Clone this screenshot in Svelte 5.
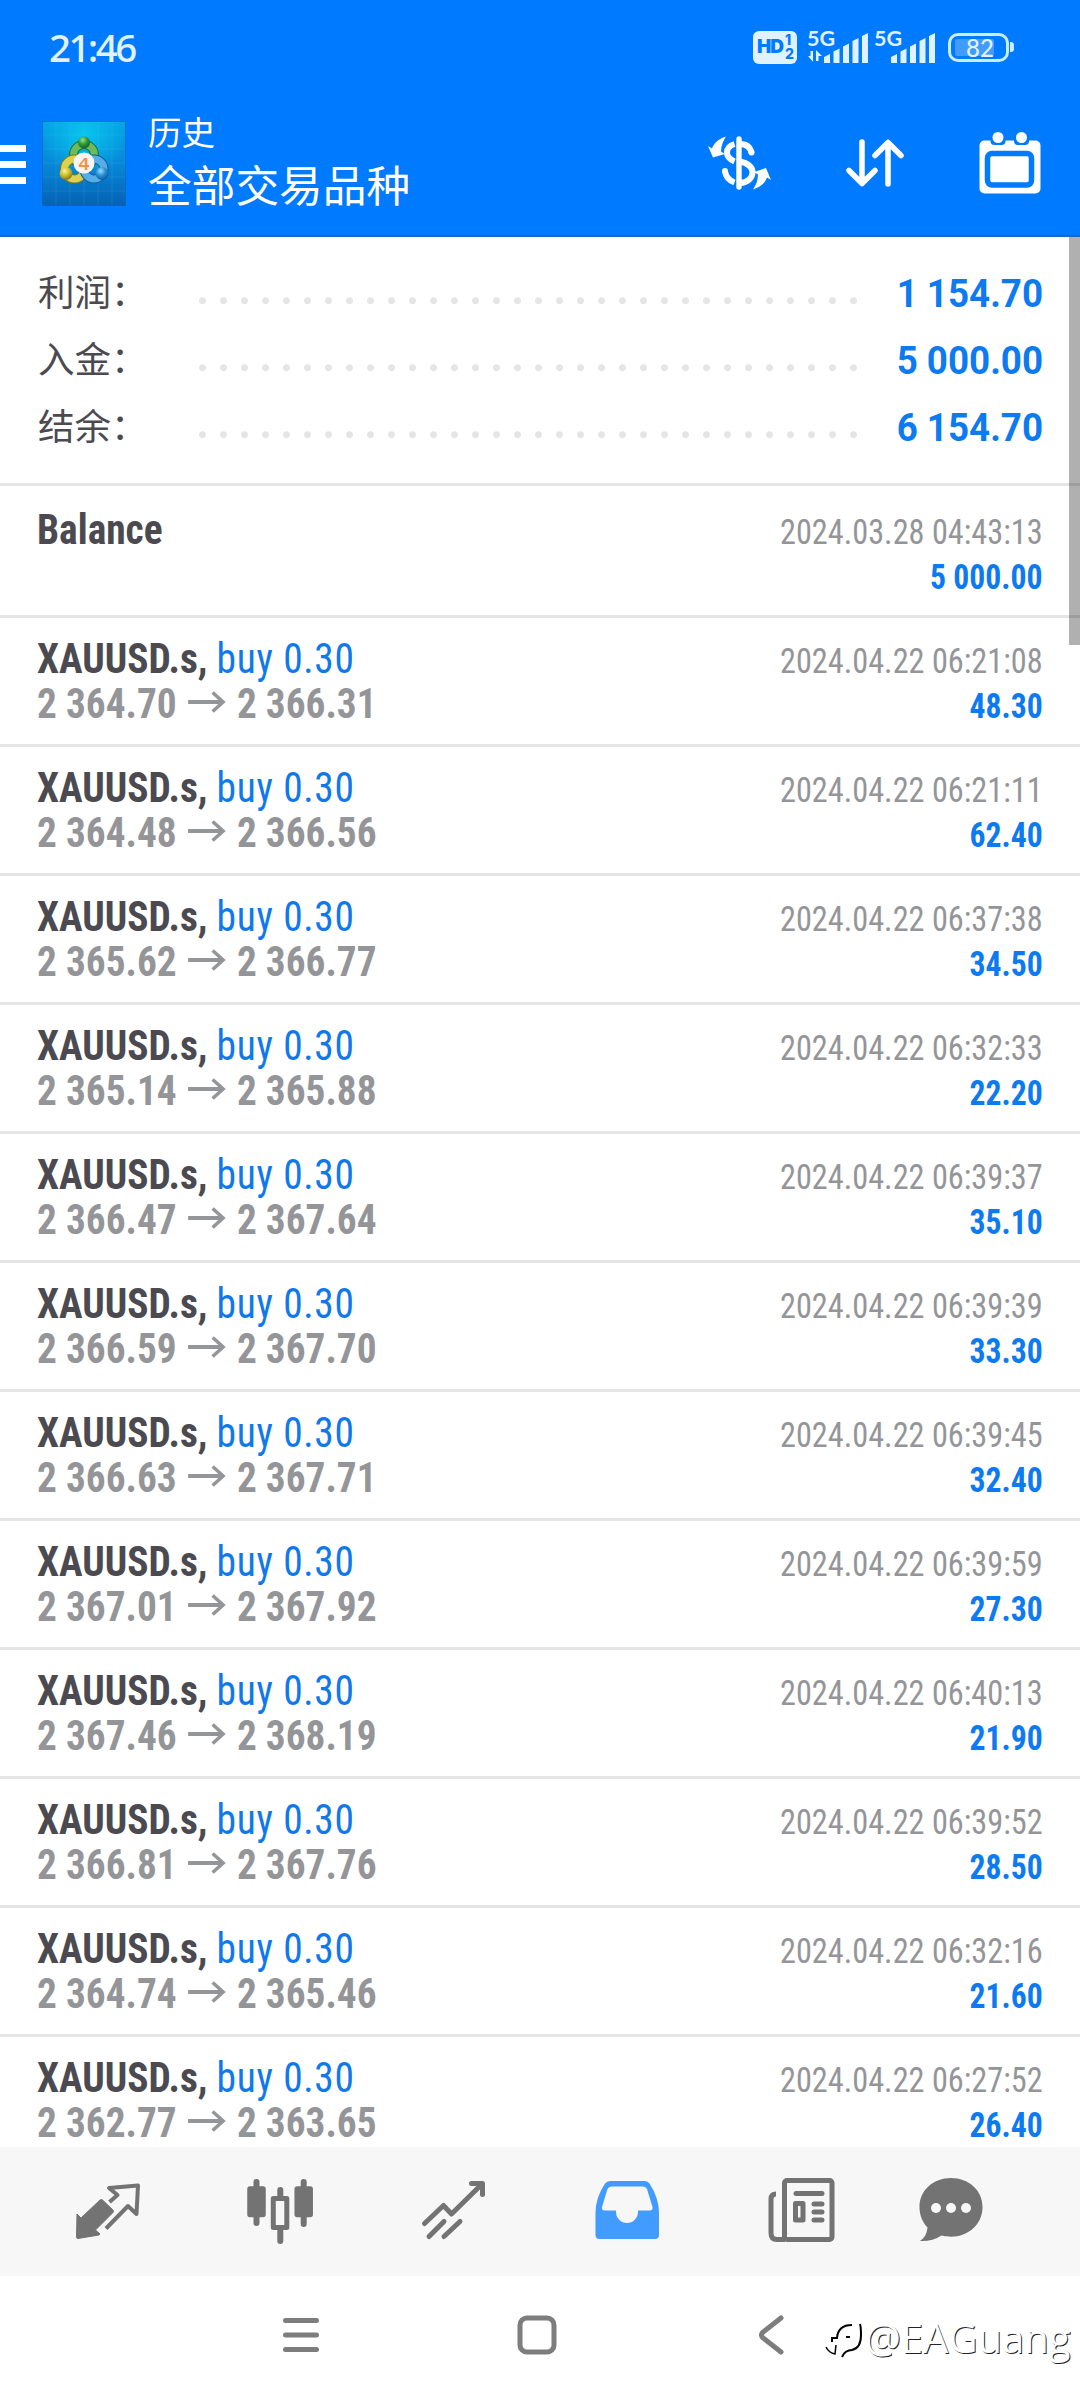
<script lang="ts">
  interface Deal {
    symbol: string;
    side?: string;
    open?: string;
    close?: string;
    time: string;
    profit: string;
  }

  const summary = [
    { label: '利润', value: '1 154.70' },
    { label: '入金', value: '5 000.00' },
    { label: '结余', value: '6 154.70' }
  ];

  function buy(open: string, close: string, time: string, profit: string): Deal {
    return { symbol: 'XAUUSD.s', side: 'buy 0.30', open, close, time: `2024.04.22 ${time}`, profit };
  }

  const deals: Deal[] = [
    { symbol: 'Balance', time: '2024.03.28 04:43:13', profit: '5 000.00' },
    buy('2 364.70', '2 366.31', '06:21:08', '48.30'),
    buy('2 364.48', '2 366.56', '06:21:11', '62.40'),
    buy('2 365.62', '2 366.77', '06:37:38', '34.50'),
    buy('2 365.14', '2 365.88', '06:32:33', '22.20'),
    buy('2 366.47', '2 367.64', '06:39:37', '35.10'),
    buy('2 366.59', '2 367.70', '06:39:39', '33.30'),
    buy('2 366.63', '2 367.71', '06:39:45', '32.40'),
    buy('2 367.01', '2 367.92', '06:39:59', '27.30'),
    buy('2 367.46', '2 368.19', '06:40:13', '21.90'),
    buy('2 366.81', '2 367.76', '06:39:52', '28.50'),
    buy('2 364.74', '2 365.46', '06:32:16', '21.60'),
    buy('2 362.77', '2 363.65', '06:27:52', '26.40')
  ];
</script>

{#snippet signal()}
  <svg class="bars" width="44" height="30" viewBox="0 0 44 30" fill="currentColor">
    <path d="M0 24l6-3v9H0zM9.5 18.5l6-3V30h-6zM19 13.5l6-3V30h-6zM28.5 8l6-3v25h-6zM38 3l6-3v30h-6z" />
  </svg>
{/snippet}

<div class="screen">
  <header>
    <div class="status-bar">
      <span class="clock">21:46</span>
      <span class="hd">
        <b>HD</b>
        <span class="hd-sims"><i>1</i><i>2</i></span>
      </span>
      <div class="network">
        <span>5G</span>
        <svg class="updown" width="14" height="12" viewBox="0 0 14 12">
          <path d="M0 6h2.500V1H5v11zM8 0v11h2.500V6H14z" fill="currentColor" />
        </svg>
        {@render signal()}
      </div>
      <div class="network">
        <span>5G</span>
        {@render signal()}
      </div>
      <div class="battery"><span>82</span></div>
      <div class="battery-cap"></div>
    </div>

    <div class="app-bar">
      <div class="menu"><span></span><span></span><span></span></div>
      <svg class="logo" width="84" height="85" viewBox="0 0 84 85">
        <defs>
          <linearGradient id="tile" x1="0" y1="0" x2="0" y2="1">
            <stop offset="0" stop-color="#04a5e6" />
            <stop offset="0.5" stop-color="#0788d8" />
            <stop offset="1" stop-color="#0561b4" />
          </linearGradient>
          <radialGradient id="glow" cx="0.5" cy="0.15" r="0.5">
            <stop offset="0" stop-color="#08c4ee" />
            <stop offset="1" stop-color="#08c4ee" stop-opacity="0" />
          </radialGradient>
          <radialGradient id="green" cx="0.4" cy="0.3" r="0.7">
            <stop offset="0" stop-color="#9be08a" />
            <stop offset="0.5" stop-color="#2f9a3d" />
            <stop offset="1" stop-color="#14652a" />
          </radialGradient>
          <radialGradient id="yellow" cx="0.4" cy="0.3" r="0.7">
            <stop offset="0" stop-color="#fbf49a" />
            <stop offset="0.5" stop-color="#cfc02c" />
            <stop offset="1" stop-color="#83791a" />
          </radialGradient>
          <radialGradient id="blue" cx="0.4" cy="0.3" r="0.7">
            <stop offset="0" stop-color="#9fdcfa" />
            <stop offset="0.5" stop-color="#2a93d8" />
            <stop offset="1" stop-color="#0c5a9c" />
          </radialGradient>
        </defs>
        <rect width="84" height="85" fill="url(#tile)" />
        <rect width="84" height="85" fill="url(#glow)" />
        <path d="M14 0v85M28 0v85M42 0v85M56 0v85M70 0v85M0 14h84M0 28h84M0 42h84M0 56h84M0 70h84" stroke="#5cc8f5" stroke-opacity="0.15" />
        <g fill="none">
          <circle cx="42" cy="34" r="10.5" stroke="#1f6b2c" stroke-width="9" />
          <circle cx="42" cy="34" r="10.5" stroke="#6cba5c" stroke-width="7" />
          <circle cx="32.5" cy="48" r="10" stroke="#81781c" stroke-width="9" />
          <circle cx="32.5" cy="48" r="10" stroke="#dcd250" stroke-width="7" />
          <circle cx="52" cy="48" r="10" stroke="#0f5da0" stroke-width="9" />
          <circle cx="52" cy="48" r="10" stroke="#56aee6" stroke-width="7" />
        </g>
        <circle cx="42" cy="21.500" r="6" fill="url(#green)" />
        <circle cx="24" cy="52.500" r="6.500" fill="url(#yellow)" />
        <circle cx="60" cy="52.500" r="6.500" fill="url(#blue)" />
        <circle cx="42" cy="42" r="10.500" fill="#f7f5f2" />
        <text x="42" y="48.500" text-anchor="middle">4</text>
        <rect x="0.5" y="0.5" width="83" height="84" fill="none" stroke="#0b62c0" stroke-opacity="0.7" />
      </svg>
      <div class="titles">
        <div class="title">历史</div>
        <div class="subtitle">全部交易品种</div>
      </div>
      <div class="actions">
        <svg width="63" height="54" viewBox="0 0 63 54" fill="none" stroke="#fff">
          <path d="M26.5 8C17 11 16 21 26.5 25.5M32 8c7 0 10.500 4 11.500 9M17 35.500c1 6 4 9 9.500 11M32 25.500c9 2 12.500 6 12.500 11S40 46.500 32 47" stroke-width="6" />
          <circle cx="43.500" cy="16.500" r="3" fill="#fff" stroke="none" />
          <circle cx="17" cy="35" r="3" fill="#fff" stroke="none" />
          <path d="M31 3v48" stroke-width="5.400" stroke-linecap="round" />
          <path d="M18 .5C10 3 6 7 4 12.500L0 10l5 11.500 12-3.500-4-2.500c0-5.500 2-10.500 5-15z" fill="#fff" stroke="none" />
          <path d="M45 53.500c8-2.500 12-6.500 14-12l4 2.500-5-12-12 4 4 2.500c0 5.500-2 10.500-5 15z" fill="#fff" stroke="none" />
        </svg>
        <svg width="58" height="48" viewBox="0 0 58 48" fill="none" stroke="#fff" stroke-width="5.500" stroke-linecap="round" stroke-linejoin="round">
          <path d="M16 3v41.500M3 31.500l13 13 13-13M42 45V3.500M29 16.500l13-13 13 13" />
        </svg>
        <svg width="62" height="62" viewBox="0 0 62 62">
          <rect x="0.5" y="8.500" width="61" height="53" rx="5" fill="#fff" />
          <path d="M11.500 7v2a4 4 0 0 0 4 4h7a4 4 0 0 0 4-4V7M35 7v2a4 4 0 0 0 4 4h7a4 4 0 0 0 4-4V7" fill="#007aff" />
          <circle cx="19" cy="5.500" r="5.500" fill="#fff" />
          <circle cx="42.500" cy="5.500" r="5.500" fill="#fff" />
          <rect x="8.500" y="21.500" width="44" height="31.500" rx="4.500" fill="#fff" stroke="#007aff" stroke-width="5.500" />
        </svg>
      </div>
    </div>
  </header>

  <main>
    <section class="summary">
      {#each summary as item}
        <div class="summary-row">
          <span class="summary-label">{item.label}：</span>
          <span class="dots"></span>
          <span class="summary-value">{item.value}</span>
        </div>
      {/each}
    </section>

    {#each deals as deal}
      <article class="deal" class:balance={!deal.side}>
        <div class="line">
          <span class="symbol">{deal.symbol}{#if deal.side}, <span class="side">{deal.side}</span>{/if}</span>
          <time>{deal.time}</time>
        </div>
        <div class="line">
          <span class="prices">
            {#if deal.open}
              {deal.open}<svg width="41" height="22" viewBox="0 0 38 22" preserveAspectRatio="none" fill="none" stroke="currentColor" stroke-width="4">
                <path d="M0 11h35" />
                <path d="M24.500 1.500L35 11l-10.500 9.500" stroke-width="3.500" />
              </svg>{deal.close}
            {:else}
              &nbsp;
            {/if}
          </span>
          <span class="profit">{deal.profit}</span>
        </div>
      </article>
    {/each}
    <div class="scrollbar"></div>
  </main>

  <nav class="tabs">
    <svg width="66" height="66" viewBox="0 0 66 66">
      <path d="M2 37l4 4L25 23q1.500-1 2.500 0L38 33q1 1.500 0 2.500L20.500 53l4.500 4-1 1L3 61.500q-1.500 0-1.500-1.500z" fill="currentColor" stroke="currentColor" stroke-linejoin="round" />
      <path d="M34.500 25l8-7-8.500-7 29-2.500L61.500 37 53 29 31 51.500" fill="none" stroke="currentColor" stroke-width="4" stroke-linejoin="round" />
    </svg>
    <svg width="66" height="68" viewBox="0 0 66 68" fill="none" stroke="currentColor" stroke-width="6" stroke-linecap="round">
      <path d="M9.500 5v41M56.700 5v42M33.300 13v10M33.300 54v10" />
      <rect x="3" y="12" width="13" height="25.500" stroke-linejoin="round" stroke-width="5.500" fill="currentColor" />
      <rect x="50.200" y="12" width="13" height="25.500" stroke-linejoin="round" stroke-width="5.500" fill="currentColor" />
      <rect x="26.300" y="21.500" width="13.500" height="29" stroke-width="5" stroke-linejoin="round" fill="#f7f7f7" />
    </svg>
    <svg width="66" height="66" viewBox="0 0 66 66" fill="none" stroke="currentColor" stroke-width="5" stroke-linecap="round" stroke-linejoin="round">
      <path d="M4.500 46.500l19-18 8 8.500L62 7M51.500 6.500h11v11M9 59.500l15-15M24 59.500l16-15" />
    </svg>
    <svg width="66" height="66" viewBox="0 0 66 66">
      <path d="M16 4h35q3 0 4.500 2.500Q65 21 65 36v22q0 4-4 4H5.500q-4 0-4-4V36q0-15 9.500-29.500Q13 4 16 4z" fill="#429bff" />
      <path d="M17.500 9.500h31.500q3 0 4 2.500l5.500 18q.5 3.500-3 3.500H44v1.500a11 11 0 0 1-22 0v-1.500H11q-3.500 0-3-3.500l5.500-18q1-2.500 4-2.500z" fill="#f7f7f7" />
    </svg>
    <svg width="68" height="66" viewBox="0 0 68 66" fill="none" stroke="currentColor" stroke-width="5" stroke-linecap="round">
      <rect x="16.500" y="3.500" width="47.500" height="59" rx="2.500" />
      <path d="M8 17q-5 0-5 5v34q0 6.500 6 6.500h8" stroke-linecap="butt" />
      <path d="M28 16.500h26M46 27h8M46 35h8M46 43h8" />
      <rect x="27.500" y="26.500" width="7.500" height="16.500" stroke-linejoin="round" />
    </svg>
    <svg width="66" height="66" viewBox="0 0 66 66">
      <path d="M33 1C15.500 1 1.500 13 1.500 30c0 8.500 3 15 8 20.500-.5 6-3 10.500-7.500 13.500 8 .5 15-1.500 21.500-5.500 3 .8 6 1.200 9.500 1.200 17.500 0 31.500-12.500 31.500-29.700C64.500 13 50.500 1 33 1z" fill="currentColor" />
      <g fill="#f7f7f7">
        <circle cx="18" cy="31" r="5" />
        <circle cx="33" cy="31" r="5" />
        <circle cx="48" cy="31" r="5" />
      </g>
    </svg>
  </nav>

  <footer>
    <svg width="38" height="38" viewBox="0 0 38 38">
      <path d="M3.500 4.500h31M3.500 19h31M3.500 33.500h31" />
    </svg>
    <svg width="40" height="40" viewBox="0 0 40 40">
      <rect x="3" y="3" width="34" height="34" rx="7" />
    </svg>
    <svg width="26" height="40" viewBox="0 0 26 40">
      <path d="M23 3L4.500 17.500q-2 2.500 0 5L23 37" />
    </svg>
    <div class="watermark">
      <svg width="38" height="42" viewBox="0 0 38 42" fill="none" stroke="#000">
        <path d="M1 30q3 6 9 7l1-9" stroke-width="1.500" />
        <path d="M7 25v-4h5q1-13 15-13" stroke-width="2" />
        <path d="M21 20h4" stroke-width="2" />
        <path d="M35 7q1 3 1 11 0 13-9 15-7 0-10 7" stroke-width="2" />
      </svg>
      <span>@EAGuang</span>
    </div>
  </footer>
</div>

<style>
  :global(body) {
    margin: 0;
    background: #fff;
  }

  .screen {
    width: 1080px;
    height: 2400px;
    display: flex;
    flex-direction: column;
    overflow: hidden;
    font-family: Roboto, 'Noto Sans CJK SC', sans-serif;
    color: #4b4a50;
    background: #fff;
  }

  svg {
    display: block;
    flex: none;
  }

  header {
    flex: none;
    height: 235px;
    border-bottom: 2px solid #1b68b8;
    background: #007aff;
    color: #fff;
  }

  .status-bar {
    height: 94px;
    display: flex;
    align-items: center;
    padding: 0 67px 0 49px;
    color: #e1f2ff;
  }

  .clock {
    flex: 1;
    font: 500 38.5px/46px 'Noto Sans', sans-serif;
    letter-spacing: -2.6px;
  }

  .hd {
    display: flex;
    align-items: center;
    justify-content: center;
    gap: 2px;
    width: 44px;
    height: 33px;
    margin-right: 11px;
    border-radius: 6px;
    background: #e1f2ff;
    color: #007aff;
    font: 800 19px/20px Inter, sans-serif;
    letter-spacing: -1px;
  }

  .hd-sims {
    display: flex;
    flex-direction: column;
    font-size: 14px;
    line-height: 14px;
  }

  .hd-sims i {
    font-style: normal;
  }

  .network {
    position: relative;
    width: 60px;
    height: 32px;
    margin-right: 7px;
    display: flex;
    align-items: flex-end;
    justify-content: flex-end;
  }

  .network span {
    position: absolute;
    left: -1px;
    top: -1px;
    font: 700 21.5px/16px Lato, sans-serif;
  }

  .updown {
    margin-right: 2px;
    margin-bottom: 1px;
  }

  .battery {
    box-sizing: border-box;
    width: 61px;
    height: 29px;
    margin-left: 6px;
    padding: 3px 12px 3px 4px;
    border: 3px solid #c8edff;
    border-radius: 10px;
  }

  .battery span {
    display: block;
    height: 17px;
    padding-left: 11px;
    border-radius: 2px;
    background: #429bff;
    font: 500 24px/17px Lato, sans-serif;
  }

  .battery-cap {
    width: 4px;
    height: 10px;
    margin-left: 1px;
    margin-right: -1px;
    border-radius: 0 3px 3px 0;
    background: #c8edff;
  }

  .app-bar {
    height: 141px;
    display: flex;
    align-items: center;
  }

  .menu {
    display: flex;
    flex-direction: column;
    gap: 9px;
    width: 26px;
    margin-right: 16px;
  }

  .menu span {
    height: 7px;
    background: #fff;
  }

  .logo {
    margin-top: -2px;
  }

  .logo text {
    font: 700 19px 'Liberation Mono', monospace;
    fill: #f0934a;
  }

  .titles {
    flex: 1;
    margin: -7px 0 0 22px;
    font-family: 'Noto Sans CJK SC', sans-serif;
  }

  .title {
    font-size: 33.5px;
    line-height: 45px;
  }

  .subtitle {
    font-size: 43.7px;
    line-height: 61px;
  }

  .actions {
    display: flex;
    align-items: center;
    gap: 75px;
    margin-top: -3px;
    padding-right: 39px;
  }

  main {
    position: relative;
    flex: none;
    height: 1910px;
    overflow: hidden;
  }

  .summary {
    padding: 23px 37px 22px 38px;
    border-bottom: 3px solid #e5e5e5;
  }

  .summary-row {
    display: flex;
    height: 67px;
    line-height: 67px;
  }

  .summary-label {
    width: 154px;
    font: 36.5px/62px 'Noto Sans CJK SC', sans-serif;
  }

  .dots {
    width: 672px;
    background: radial-gradient(circle at 10.5px 40.7px, #e5e5e5 3px, transparent 3.9px) 0 0 / 21px 67px repeat-x;
  }

  .summary-value {
    flex: 1;
    text-align: right;
    white-space: nowrap;
    font-size: 38.3px;
    font-weight: 700;
    color: #0c7af0;
    transform: scaleX(0.96);
    transform-origin: right;
  }

  .deal {
    box-sizing: border-box;
    height: 129px;
    padding: 18px 37px 0;
    border-bottom: 3px solid #e5e5e5;
    font-family: 'Roboto Condensed', sans-serif;
    font-size: 42.4px;
  }

  .deal.balance {
    height: 132px;
    padding-top: 21px;
  }

  .line {
    display: flex;
    align-items: baseline;
    justify-content: space-between;
    height: 45px;
    line-height: 45px;
    white-space: nowrap;
  }

  .symbol,
  .prices {
    font-weight: 700;
    transform: scaleX(0.927);
    transform-origin: left;
  }

  .symbol {
    transform: scaleX(0.93);
  }

  .side {
    font-weight: 400;
    letter-spacing: 0.7px;
    color: #0f79ec;
  }

  .prices {
    color: #949599;
  }

  .prices svg {
    display: inline-block;
    margin: 0 12px;
    vertical-align: 5px;
  }

  time {
    font-size: 34.5px;
    color: #949599;
    transform: scaleX(0.936);
    transform-origin: right;
  }

  .profit {
    font-size: 34.5px;
    font-weight: 700;
    color: #0c7af0;
    transform: scaleX(0.918);
    transform-origin: right;
  }

  .scrollbar {
    position: absolute;
    top: 0;
    right: 0;
    width: 11px;
    height: 408px;
    background: rgba(0, 0, 0, 0.31);
  }

  .tabs {
    box-sizing: border-box;
    flex: none;
    height: 129px;
    display: grid;
    grid-template-columns: 172px 173px 174px 174px 150px 66px;
    align-items: start;
    padding: 30px 0 0 75px;
    background: #f7f7f7;
    color: #737373;
  }

  footer {
    position: relative;
    height: 118px;
    display: flex;
    align-items: center;
    padding-left: 282px;
  }

  footer > svg {
    fill: none;
    stroke: #7d7d7d;
    stroke-width: 5;
    stroke-linecap: round;
  }

  footer > svg:nth-child(2) {
    margin-left: 197px;
    margin-right: 201px;
  }

  /* overlaid on the system navigation */
  .watermark {
    position: absolute;
    left: 825px;
    top: 37px;
    display: flex;
    align-items: center;
    gap: 2px;
    font: 400 40px/50px 'Open Sans', sans-serif;
    color: #fff;
    text-shadow: 1px 1px 0 #222;
  }
</style>
